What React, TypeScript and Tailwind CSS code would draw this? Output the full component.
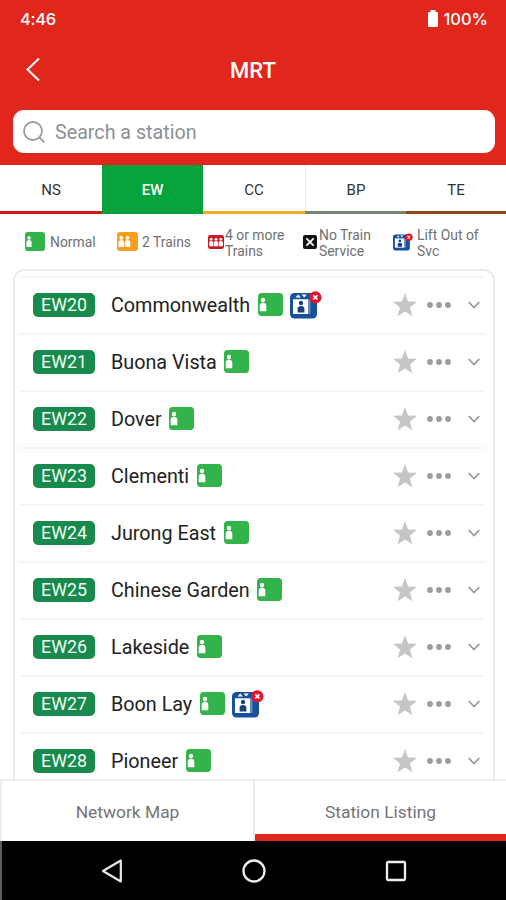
import { useState } from "react";

const lines = [
  { code: "NS", bar: "bg-[#d0181b]" },
  { code: "EW", bar: "bg-[#06a23b]" },
  { code: "CC", bar: "bg-[#f9ab23]" },
  { code: "BP", bar: "bg-[#738477]" },
  { code: "TE", bar: "bg-[#93481c]" },
];

const stations = [
  { code: "EW20", name: "Commonwealth", liftOut: true },
  { code: "EW21", name: "Buona Vista" },
  { code: "EW22", name: "Dover" },
  { code: "EW23", name: "Clementi" },
  { code: "EW24", name: "Jurong East" },
  { code: "EW25", name: "Chinese Garden" },
  { code: "EW26", name: "Lakeside" },
  { code: "EW27", name: "Boon Lay", liftOut: true },
  { code: "EW28", name: "Pioneer" },
];

function Person({ x }: { x: number }) {
  return (
    <g transform={`translate(${x} 0)`} fill="#fff">
      <circle cx="3.5" cy="6.8" r="2.2" />
      <path d="M0.2 17.5v-5.3c0-1.8 1.2-2.9 3.3-2.9s3.3 1.1 3.3 2.9v5.3z" />
    </g>
  );
}

function CrowdIcon({ level, className }: { level: number; className: string }) {
  const color = level === 1 ? "#33b44a" : level === 2 ? "#f99d1c" : "#cc1a25";
  return (
    <svg viewBox="0 0 25 22" preserveAspectRatio="none" className={className}>
      <rect width="25" height="22" rx="3.5" fill={color} />
      <Person x={1.5} />
      {level > 1 && <Person x={9} />}
      {level > 2 && <Person x={16.5} />}
    </svg>
  );
}

function LiftIcon({ className }: { className: string }) {
  return (
    <svg viewBox="0 0 32 28" className={className}>
      <rect x="0" y="2" width="27" height="25.5" rx="4.5" fill="#17509b" />
      <path d="M5.5 6.4h5.4L8.2 3.4z M11.6 3.6h5.2l-2.6 3z" fill="#fff" />
      <path d="M3 8.3h15.3v14.7h-15.3z" fill="#fff" />
      <path d="M19.8 8.3v14.7" stroke="#8fabd2" strokeWidth="1" />
      <circle cx="11" cy="12" r="2.2" fill="#17407f" />
      <path d="M7.6 21.6v-4c0-1.6 1.4-2.6 3.4-2.6s3.4 1 3.4 2.6v4z" fill="#17407f" />
      <circle cx="25.3" cy="6.4" r="6.1" fill="#e5132c" />
      <path d="M23.2 4.3l4.2 4.2m0-4.2l-4.2 4.2" stroke="#fff" strokeWidth="1.7" />
    </svg>
  );
}

function NoServiceIcon() {
  return (
    <svg viewBox="0 0 14 14" className="size-[14px] shrink-0">
      <rect width="14" height="14" rx="2" fill="#111" />
      <path d="M3.4 3.4l7.2 7.2m0-7.2l-7.2 7.2" stroke="#fff" strokeWidth="1.8" />
    </svg>
  );
}

function StatusBar() {
  return (
    <div className="flex h-[38px] items-center justify-between pl-5 pr-[18px] font-['Inter',sans-serif] text-[16.5px] font-medium">
      <span className="tracking-[-0.3px]">4:46</span>
      <span className="flex items-center gap-[5px]">
        <svg viewBox="0 0 10 17" className="mb-[2px] h-[17px] w-[10px]">
          <path d="M2.5 0h5v2H9a1 1 0 0 1 1 1v13a1 1 0 0 1-1 1H1a1 1 0 0 1-1-1V3a1 1 0 0 1 1-1h1.5z" fill="#fff" />
        </svg>
        100%
      </span>
    </div>
  );
}

function Legend() {
  return (
    <div className="flex h-[55px] items-center pl-[25px] text-[13.9px] leading-4 text-[#707070]">
      <div className="flex w-[92px] items-center gap-[5px]">
        <CrowdIcon level={1} className="h-[19px] w-5" />
        <span>Normal</span>
      </div>
      <div className="flex w-[91px] items-center gap-[4px]">
        <CrowdIcon level={2} className="h-[19px] w-[21px]" />
        <span>2 Trains</span>
      </div>
      <div className="flex w-[95px] items-center gap-[1px]">
        <CrowdIcon level={3} className="h-[14px] w-4 shrink-0" />
        <span className="pt-[2px]">4 or more<br />Trains</span>
      </div>
      <div className="flex w-[90px] items-center gap-[2px]">
        <NoServiceIcon />
        <span className="pt-[2px]">No Train<br />Service</span>
      </div>
      <div className="flex items-center gap-[4px]">
        <LiftIcon className="h-[18px] w-5 shrink-0" />
        <span className="pt-[2px]">Lift Out of<br />Svc</span>
      </div>
    </div>
  );
}

export default function App() {
  const [line, setLine] = useState("EW");

  return (
    <div className="flex h-[900px] w-[506px] flex-col overflow-hidden bg-white font-['Roboto',sans-serif]">
      <header className="h-[165px] shrink-0 bg-[#e1261c] text-white">
        <StatusBar />
        <div className="grid h-[64px] grid-cols-3 items-center">
          <svg viewBox="0 0 14 24" className="ml-[26px] h-6 w-[14px]" fill="none" stroke="#fff" strokeWidth="2">
            <path d="M13 0.5L1.5 11.5L13 22.5" />
          </svg>
          <h1 className="text-center text-[22px] font-medium">MRT</h1>
        </div>
        <div className="ml-[13px] mr-[11px] mt-2 flex h-[43px] items-center rounded-[11px] bg-white pl-[10px]">
          <svg viewBox="0 0 22 22" className="size-[22px]" fill="none" stroke="#9b9b9b" strokeWidth="1.8">
            <circle cx="10" cy="10" r="9" />
            <path d="M16.3 16.3L21.3 21.3" />
          </svg>
          <span className="ml-[10px] pt-[3px] text-[19.7px] text-[#8b9093]">Search a station</span>
        </div>
      </header>

      {/* Line tabs */}
      <div className="grid h-[49px] shrink-0 grid-cols-[102px_101px_102px_101px_100px] text-[15px]">
        {lines.map((l) => (
          <button
            key={l.code}
            onClick={() => setLine(l.code)}
            className={`flex flex-col ${line === l.code ? "bg-[#06a23b] font-medium text-white" : "bg-white text-[#333]"}`}
          >
            <span
              className={`flex w-full flex-1 items-center justify-center pt-[4px] ${
                l.code === "BP" ? "border-l border-[#ebebeb]" : ""
              }`}
            >
              {l.code}
            </span>
            <span className={`h-[3px] w-full ${l.bar}`} />
          </button>
        ))}
      </div>

      <Legend />

      {/* Station list */}
      <div className="ml-[13px] mr-[11px] min-h-0 flex-1 overflow-hidden rounded-t-[11px] border-2 border-b-0 border-[#ececec] pt-[5px]">
        {stations.map((s) => (
          <div
            key={s.code}
            className="ml-[5px] mr-[9px] flex h-[57px] items-center border-t-2 border-[#f5f5f5] pb-[2px] pl-[13px] pr-[4px]"
          >
            <span className="flex h-6 w-[62px] items-center justify-center rounded-[5px] bg-[#198a4e] pt-[2px] text-[17.8px] text-[#f2fff5]">
              {s.code}
            </span>
            <span className="ml-[16px] pt-[2px] text-[19.75px] text-[#222]">{s.name}</span>
            <CrowdIcon level={1} className="ml-[7.5px] h-[23px] w-[25px]" />
            {s.liftOut && <LiftIcon className="ml-[7px] h-7 w-8" />}
            <svg viewBox="0 0 24 24" className="ml-auto size-6" fill="#c6c6c6">
              <path d="M12 0l3.1 8.4 8.9.4-7 5.6 2.4 8.9L12 18.5l-7.4 4.8L7 14.4 0 8.8l8.9-.4z" />
            </svg>
            <svg viewBox="0 0 24 6" className="ml-[10px] h-[6px] w-6" fill="#9c9c9c">
              <circle cx="3" cy="3" r="2.9" />
              <circle cx="12" cy="3" r="2.9" />
              <circle cx="21" cy="3" r="2.9" />
            </svg>
            <svg viewBox="0 0 12 8" className="ml-[17px] h-2 w-3" fill="none" stroke="#999" strokeWidth="1.8">
              <path d="M.7 1L6 6.5L11.3 1" />
            </svg>
          </div>
        ))}
      </div>

      {/* Bottom tabs */}
      <div className="grid h-[62px] shrink-0 grid-cols-[255px_251px] border-t-2 border-[#ededed] text-[17.4px] text-[#757575]">
        <button className="border-x-2 border-[#ececec] pt-[3px]">Network Map</button>
        <button className="border-b-[7px] border-[#e1261c] pt-[10px]">Station Listing</button>
      </div>

      <nav className="flex h-[59px] shrink-0 items-center border-l-2 border-[#5c5c5c] bg-black pl-[99px]">
        <svg viewBox="0 0 22 24" className="h-6 w-[22px]" fill="none" stroke="#e8e8e8" strokeWidth="2.2" strokeLinejoin="round">
          <path d="M19.8 1.5v21L2 12z" />
        </svg>
        <svg viewBox="0 0 24 24" className="ml-[119px] size-6" fill="none" stroke="#f0f0f0" strokeWidth="2.3">
          <circle cx="12" cy="12" r="10.5" />
        </svg>
        <svg viewBox="0 0 22 22" className="ml-[119px] size-[22px]" fill="none" stroke="#f0f0f0" strokeWidth="2.3">
          <rect x="2" y="2" width="18" height="18" rx="1" />
        </svg>
      </nav>
    </div>
  );
}
